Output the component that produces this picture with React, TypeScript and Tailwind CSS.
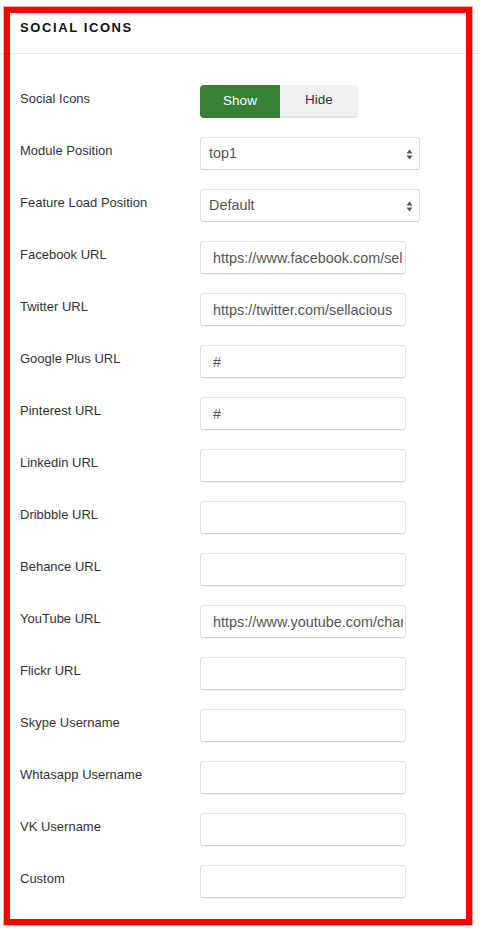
import React from "react";

const font = { fontFamily: '"Liberation Sans", Arial, sans-serif' };

function TextInput({ value }: { value?: string }) {
  return (
    <input
      readOnly
      value={value ?? ""}
      className="w-[206px] h-[33px] rounded-[3px] border border-[#e2e2e2] border-b-[#d4d4d4] bg-white pl-[12px] pr-[2px] text-[14.4px] text-[#555] outline-none shadow-[0_1px_0_rgba(0,0,0,0.04)]"
      style={font}
    />
  );
}

function SelectBox({ value }: { value: string }) {
  return (
    <div className="relative flex h-[33px] w-[220px] items-center rounded-[3px] border border-[#e2e2e2] border-b-[#d4d4d4] bg-white pl-[8px] text-[#555]">
      <span className="text-[14.4px]">{value}</span>
      <svg className="absolute right-[6px] top-[11px]" width="7" height="11" viewBox="0 0 7 11">
        <path d="M3.5 0.5 L6.5 4.5 L0.5 4.5 Z" fill="#555" />
        <path d="M3.5 10.5 L6.5 6.5 L0.5 6.5 Z" fill="#555" />
      </svg>
    </div>
  );
}

function Toggle() {
  return (
    <div className="flex h-[33px] text-[13.5px]">
      <div className="flex w-[80px] items-center justify-center rounded-l-[4px] bg-[#378137] text-white">Show</div>
      <div className="flex w-[78px] items-center justify-center rounded-r-[4px] bg-[#f1f1f1] text-[#333] border-b-2 border-[#e4e4e4]">Hide</div>
    </div>
  );
}

type Row = { label: string; control: React.ReactNode };

export default function App() {
  const rows: Row[] = [
    { label: "Social Icons", control: <Toggle /> },
    { label: "Module Position", control: <SelectBox value="top1" /> },
    { label: "Feature Load Position", control: <SelectBox value="Default" /> },
    { label: "Facebook URL", control: <TextInput value="https://www.facebook.com/sellacious" /> },
    { label: "Twitter URL", control: <TextInput value="https://twitter.com/sellacious" /> },
    { label: "Google Plus URL", control: <TextInput value="#" /> },
    { label: "Pinterest URL", control: <TextInput value="#" /> },
    { label: "Linkedin URL", control: <TextInput /> },
    { label: "Dribbble URL", control: <TextInput /> },
    { label: "Behance URL", control: <TextInput /> },
    { label: "YouTube URL", control: <TextInput value="https://www.youtube.com/channel" /> },
    { label: "Flickr URL", control: <TextInput /> },
    { label: "Skype Username", control: <TextInput /> },
    { label: "Whtasapp Username", control: <TextInput /> },
    { label: "VK Username", control: <TextInput /> },
    { label: "Custom", control: <TextInput /> },
  ];

  return (
    <div className="relative h-[928px] w-[480px] overflow-hidden bg-white text-[#333]" style={font}>
      <div className="flex h-[54px] items-center border-b border-[#e8e8e8] pl-[20px] pt-[2px]">
        <h2 className="text-[13px] font-bold tracking-[1.6px] text-[#111]">SOCIAL ICONS</h2>
      </div>
      <div className="flex flex-col gap-[19px] pl-[20px] pt-[31px]">
        {rows.map((r) => (
          <div key={r.label} className="flex">
            <div className="w-[180px] pt-[5px] text-[13px] leading-[18px] text-[#333]">{r.label}</div>
            {r.control}
          </div>
        ))}
      </div>
      <div className="pointer-events-none absolute left-[4px] top-[7px] h-[918px] w-[468px] border-[6px] border-[#ff0000] shadow-[0_0_0_1px_rgba(255,80,80,0.5)]" />
    </div>
  );
}
